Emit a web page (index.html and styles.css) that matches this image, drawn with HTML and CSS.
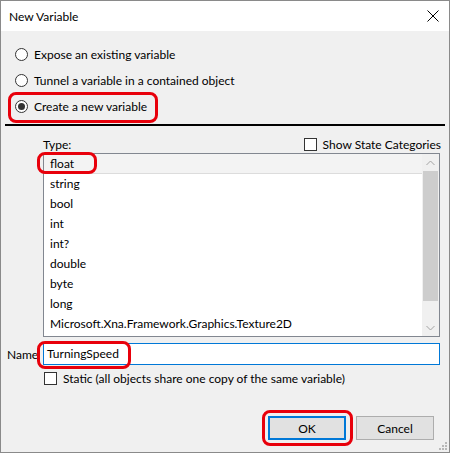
FILE: index.html
```html
<!DOCTYPE html>
<html>
<head>
<meta charset="utf-8">
<link rel="stylesheet" href="styles.css">
</head>
<body>
<div class="window">
  <div class="titlebar">
    <span class="title">New Variable</span>
    <svg class="close" width="12" height="12" viewBox="0 0 12 12"><path d="M0.5 0.5 L11.5 11.5 M11.5 0.5 L0.5 11.5" stroke="#000" stroke-width="1" fill="none"/></svg>
  </div>
  <div class="content">
    <div class="radios">
      <div class="radio-row"><span class="radio"></span><span>Expose an existing variable</span></div>
      <div class="radio-row"><span class="radio"></span><span>Tunnel a variable in a contained object</span></div>
      <div class="radio-row hl-wrap"><span class="radio checked"></span><span>Create a new variable</span><span class="hl hl-create"></span></div>
    </div>
    <div class="divider"></div>
    <div class="type-head">
      <span>Type:</span>
      <label class="check-row"><span class="check"></span><span>Show State Categories</span></label>
    </div>
    <div class="listbox">
      <div class="items">
        <div class="item selected">float<span class="hl hl-float"></span></div>
        <div class="item">string</div>
        <div class="item">bool</div>
        <div class="item">int</div>
        <div class="item">int?</div>
        <div class="item">double</div>
        <div class="item">byte</div>
        <div class="item">long</div>
        <div class="item">Microsoft.Xna.Framework.Graphics.Texture2D</div>
      </div>
      <div class="scrollbar">
        <div class="arrow"><svg width="9" height="6" viewBox="0 0 9 6"><path d="M0.5 5 L4.5 1 L8.5 5" stroke="#a3a3a3" fill="none"/></svg></div>
        <div class="thumb"></div>
        <div class="track"></div>
        <div class="arrow"><svg width="9" height="6" viewBox="0 0 9 6"><path d="M0.5 1 L4.5 5 L8.5 1" stroke="#a3a3a3" fill="none"/></svg></div>
      </div>
    </div>
    <div class="name-row">
      <span class="name-label">Name</span>
      <div class="textbox">TurningSpeed<span class="hl hl-name"></span></div>
    </div>
    <label class="check-row static-row"><span class="check"></span><span>Static (all objects share one copy of the same variable)</span></label>
    <div class="buttons">
      <button class="btn default">OK<span class="hl hl-ok"></span></button>
      <button class="btn">Cancel</button>
    </div>
    <div class="grip">
      <svg width="8" height="8" viewBox="0 0 8 8" fill="#b8b8b8"><rect x="6" y="0" width="2" height="2"/><rect x="3" y="3" width="2" height="2"/><rect x="6" y="3" width="2" height="2"/><rect x="0" y="6" width="2" height="2"/><rect x="3" y="6" width="2" height="2"/><rect x="6" y="6" width="2" height="2"/></svg>
    </div>
  </div>
</div>
</body>
</html>
```
FILE: styles.css
```css
* { box-sizing: border-box; }
html, body { margin: 0; padding: 0; }
body {
  width: 450px;
  height: 453px;
  font-family: Lato, "Liberation Sans", Arial, sans-serif;
  font-size: 12px;
  color: #000;
}
.window {
  width: 450px;
  height: 453px;
  border: 1px solid #8a8a8a;
  display: flex;
  flex-direction: column;
  background: #f0f0f0;
}
.titlebar {
  height: 30px;
  background: #fff;
  display: flex;
  align-items: center;
  justify-content: space-between;
  padding: 0 10px 0 8px;
  flex: none;
}
.close { display: block; }
.content {
  flex: 1;
  position: relative;
  display: flex;
  flex-direction: column;
}
.radios { padding-top: 10px; }
.radio-row {
  height: 26px;
  display: flex;
  align-items: center;
  padding-left: 14px;
  gap: 6px;
  position: relative;
}
.radio {
  width: 13px;
  height: 13px;
  border: 1px solid #333;
  border-radius: 50%;
  background: #fff;
  display: flex;
  align-items: center;
  justify-content: center;
  flex: none;
}
.radio.checked::after {
  content: "";
  width: 7px;
  height: 7px;
  border-radius: 50%;
  background: #333;
}
.hl {
  position: absolute;
  border: 3px solid #e8000b;
  border-radius: 8px;
  pointer-events: none;
}
.hl-create { left: 7px; top: -1px; width: 150px; height: 31px; }
.divider {
  margin: 5px 4px 0 4px;
  height: 2px;
  background: #000;
}
.type-head {
  display: flex;
  justify-content: space-between;
  align-items: center;
  margin: 11px 8px 0 42px;
  height: 14px;
}
.check-row {
  display: flex;
  align-items: center;
  gap: 6px;
}
.check {
  width: 13px;
  height: 13px;
  border: 1px solid #333;
  background: #fff;
  flex: none;
}
.listbox {
  margin: 2px 9px 0 42px;
  height: 184px;
  border: 1px solid #828790;
  background: #fff;
  display: flex;
}
.items { flex: 1; }
.item {
  height: 20px;
  line-height: 20px;
  padding-left: 6px;
  position: relative;
}
.item.selected {
  background: #f3f3f3;
  border-bottom: 1px solid #dcdcdc;
  line-height: 19px;
}
.hl-float { left: -7px; top: -2px; width: 60px; height: 22px; }
.scrollbar {
  width: 17px;
  background: #f0f0f0;
  display: flex;
  flex-direction: column;
}
.arrow {
  height: 17px;
  display: flex;
  align-items: center;
  justify-content: center;
}
.thumb { height: 130px; background: #cdcdcd; margin: 0 1px; }
.track { flex: 1; }
.name-row {
  display: flex;
  align-items: center;
  margin: 6px 9px 0 6px;
  height: 22px;
}
.name-label { width: 36px; }
.textbox {
  flex: 1;
  height: 22px;
  border: 1px solid #0078d7;
  background: #fff;
  padding-left: 3px;
  line-height: 20px;
  position: relative;
}
.hl-name { left: -7px; top: -3px; width: 94px; height: 28px; }
.static-row { margin: 6px 0 0 43px; }
.buttons {
  display: flex;
  justify-content: flex-end;
  gap: 10px;
  margin: 30px 15px 0 0;
}
.btn {
  width: 78px;
  height: 24px;
  background: #e1e1e1;
  border: 1px solid #adadad;
  font: inherit;
  color: #000;
  padding: 0;
  position: relative;
}
.btn.default { border: 2px solid #0078d7; }
.hl-ok { left: -8px; top: -8px; width: 91px; height: 36px; }
.grip {
  position: absolute;
  right: 2px;
  bottom: 2px;
  line-height: 0;
}
```
